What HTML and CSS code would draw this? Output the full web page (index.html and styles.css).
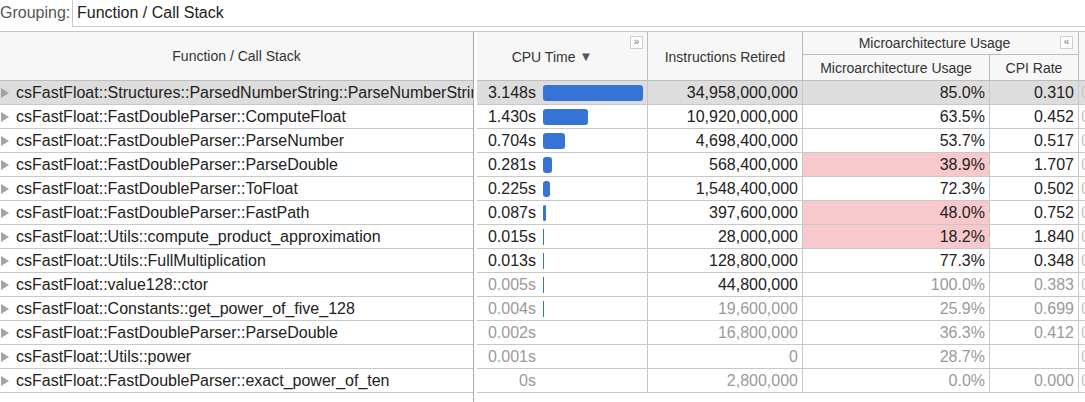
FILE: index.html
```html
<!DOCTYPE html>
<html lang="en">
<head>
    <meta charset="UTF-8">
    <title>Bottom-up - Function / Call Stack</title>
    <link rel="stylesheet" href="styles.css">
</head>
<body>

    <div class="toolbar">
        <span class="grouping-label">Grouping:</span>
        <div class="grouping-select">Function / Call Stack</div>
    </div>

    <div class="panes">
        <div class="pane-left">
            <div class="head-left">Function / Call Stack</div>
            <div class="name-row selected"><span class="twisty"></span>csFastFloat::Structures::ParsedNumberString::ParseNumberString</div>
            <div class="name-row"><span class="twisty"></span>csFastFloat::FastDoubleParser::ComputeFloat</div>
            <div class="name-row"><span class="twisty"></span>csFastFloat::FastDoubleParser::ParseNumber</div>
            <div class="name-row"><span class="twisty"></span>csFastFloat::FastDoubleParser::ParseDouble</div>
            <div class="name-row"><span class="twisty"></span>csFastFloat::FastDoubleParser::ToFloat</div>
            <div class="name-row"><span class="twisty"></span>csFastFloat::FastDoubleParser::FastPath</div>
            <div class="name-row"><span class="twisty"></span>csFastFloat::Utils::compute_product_approximation</div>
            <div class="name-row"><span class="twisty"></span>csFastFloat::Utils::FullMultiplication</div>
            <div class="name-row"><span class="twisty"></span>csFastFloat::value128::ctor</div>
            <div class="name-row"><span class="twisty"></span>csFastFloat::Constants::get_power_of_five_128</div>
            <div class="name-row"><span class="twisty"></span>csFastFloat::FastDoubleParser::ParseDouble</div>
            <div class="name-row"><span class="twisty"></span>csFastFloat::Utils::power</div>
            <div class="name-row"><span class="twisty"></span>csFastFloat::FastDoubleParser::exact_power_of_ten</div>
        </div>

        <div class="pane-right">
            <div class="head-right">
                <div class="hcell h-cpu">CPU Time <span class="sort-arrow">▼</span><span class="fold-btn fold-cpu">»</span></div>
                <div class="hcell h-instr">Instructions Retired</div>
                <div class="hcell h-group">Microarchitecture Usage<span class="fold-btn fold-group">«</span></div>
                <div class="hcell h-micro">Microarchitecture Usage</div>
                <div class="hcell h-cpi">CPI Rate</div>
                <div class="hcell h-extra"></div>
            </div>
            <div id="rows"></div>
        </div>
    </div>

    <script>
        // [cpu, instructions, microarch, cpi, highlight, dim flags: cpu, instr, micro, cpi]
        let data = [
            [3.148, "34,958,000,000", "85.0%", "0.310", false, "0000"],
            [1.430, "10,920,000,000", "63.5%", "0.452", false, "0000"],
            [0.704, "4,698,400,000", "53.7%", "0.517", false, "0000"],
            [0.281, "568,400,000", "38.9%", "1.707", true, "0000"],
            [0.225, "1,548,400,000", "72.3%", "0.502", false, "0000"],
            [0.087, "397,600,000", "48.0%", "0.752", true, "0000"],
            [0.015, "28,000,000", "18.2%", "1.840", true, "0000"],
            [0.013, "128,800,000", "77.3%", "0.348", false, "0000"],
            [0.005, "44,800,000", "100.0%", "0.383", false, "1011"],
            [0.004, "19,600,000", "25.9%", "0.699", false, "1111"],
            [0.002, "16,800,000", "36.3%", "0.412", false, "1111"],
            [0.001, "0", "28.7%", "", false, "1111"],
            [0, "2,800,000", "0.0%", "0.000", false, "1111"]
        ];

        let maxCpu = 3.148;
        let html = "";
        data.forEach(function(r, i) {
            let dim = r[5];
            let label = r[0] === 0 ? "0s" : r[0].toFixed(3) + "s";
            let w = Math.round(r[0] / maxCpu * 100);
            if (r[0] >= 0.004 && w < 1) w = 1;
            let bar = w > 0 ? '<span class="bar' + (w < 3 ? ' thin' : '') + '" style="width:' + w + 'px"></span>' : '';
            html += '<div class="data-row' + (i === 0 ? ' selected' : '') + '">' +
                '<div class="cell c-cpu' + (dim[0] === "1" ? ' dim' : '') + '"><span class="cpu-val">' + label + '</span>' + bar + '</div>' +
                '<div class="cell num' + (dim[1] === "1" ? ' dim' : '') + '">' + r[1] + '</div>' +
                '<div class="cell num' + (r[4] ? ' warn' : '') + (dim[2] === "1" ? ' dim' : '') + '">' + r[2] + '</div>' +
                '<div class="cell num' + (dim[3] === "1" ? ' dim' : '') + '">' + r[3] + '</div>' +
                '<div class="cell extra">0</div>' +
                '</div>';
        });
        document.getElementById("rows").innerHTML = html;
    </script>

</body>
</html>
```

FILE: styles.css
```css
body {
    font-family: "Liberation Sans", Arial, sans-serif;
    margin: 0;
    background: #fff;
    color: #222;
    width: 1085px;
    height: 402px;
    overflow: hidden;
}
.toolbar {
    display: flex;
    align-items: stretch;
    height: 31px;
}
.grouping-label {
    font-size: 16px;
    color: #555;
    padding: 4px 0 0 0;
    width: 72px;
    box-sizing: border-box;
}
.grouping-select {
    flex: 1;
    height: 27px;
    box-sizing: border-box;
    border-left: 1px solid #c8c8c8;
    border-bottom: 1px solid #c8c8c8;
    font-size: 16px;
    color: #222;
    padding: 4px 0 0 4px;
}
.panes {
    display: flex;
    border-top: 1px solid #c4c4c4;
}
.pane-left {
    width: 474px;
    box-sizing: border-box;
    border-right: 1px solid #a8a8a8;
    height: 371px;
}
.head-left {
    height: 49px;
    box-sizing: border-box;
    background: #f7f7f7;
    border-bottom: 1px solid #bdbdbd;
    display: flex;
    align-items: center;
    justify-content: center;
    font-size: 14px;
    color: #333;
}
.name-row {
    height: 24px;
    box-sizing: border-box;
    border-bottom: 1px solid #c8c8c8;
    font-size: 16px;
    line-height: 23px;
    white-space: nowrap;
    overflow: hidden;
    padding-left: 16px;
    position: relative;
}
.name-row.selected, .data-row.selected {
    background: #dddddd;
}
.twisty {
    position: absolute;
    left: 1px;
    top: 7px;
    width: 0;
    height: 0;
    border-top: 5px solid transparent;
    border-bottom: 5px solid transparent;
    border-left: 8px solid #a3a3a3;
}
.pane-right {
    margin-left: 3px;
    flex: 1;
    overflow: hidden;
}
.head-right {
    display: grid;
    grid-template-columns: 171px 155px 187px 89px 60px;
    grid-template-rows: 23px 26px;
    height: 49px;
    background: #f7f7f7;
    border-bottom: 1px solid #bdbdbd;
    box-sizing: border-box;
    font-size: 14px;
    color: #333;
}
.hcell {
    display: flex;
    align-items: center;
    justify-content: center;
    border-right: 1px solid #bdbdbd;
    position: relative;
}
.h-cpu {
    grid-column: 1;
    grid-row: 1 / 3;
    padding-right: 20px;
}
.sort-arrow {
    font-size: 13px;
    margin-left: 4px;
    color: #555;
}
.h-instr {
    grid-column: 2;
    grid-row: 1 / 3;
}
.h-group {
    grid-column: 3 / 5;
    grid-row: 1;
    border-bottom: 1px solid #bdbdbd;
    padding-right: 12px;
}
.h-micro {
    grid-column: 3;
    grid-row: 2;
}
.h-cpi {
    grid-column: 4;
    grid-row: 2;
}
.h-extra {
    grid-column: 5;
    grid-row: 1 / 3;
}
.fold-btn {
    position: absolute;
    top: 4px;
    width: 11px;
    height: 11px;
    border: 1px solid #cfcfcf;
    background: #fff;
    font-size: 10px;
    line-height: 10px;
    text-align: center;
    color: #777;
}
.fold-cpu {
    right: 4px;
}
.fold-group {
    right: 5px;
}
.data-row {
    display: grid;
    grid-template-columns: 171px 155px 187px 89px 60px;
    height: 24px;
    box-sizing: border-box;
    border-bottom: 1px solid #c8c8c8;
    font-size: 16px;
}
.cell {
    border-right: 1px solid #c8c8c8;
    line-height: 23px;
    white-space: nowrap;
    overflow: hidden;
    color: #222;
}
.num {
    text-align: right;
    padding-right: 4px;
}
.c-cpu {
    display: flex;
    align-items: center;
    padding-left: 10px;
}
.cpu-val {
    width: 49px;
    margin-right: 7px;
    text-align: right;
}
.bar {
    height: 16px;
    background: #3573d6;
    border-radius: 3px;
}
.bar.thin {
    border-radius: 0;
}
.warn {
    background: #f7c9cd;
}
.dim {
    color: #9a9a9a;
}
.extra {
    color: #c8c8c8;
    padding-left: 2px;
    border-right: none;
}
```
